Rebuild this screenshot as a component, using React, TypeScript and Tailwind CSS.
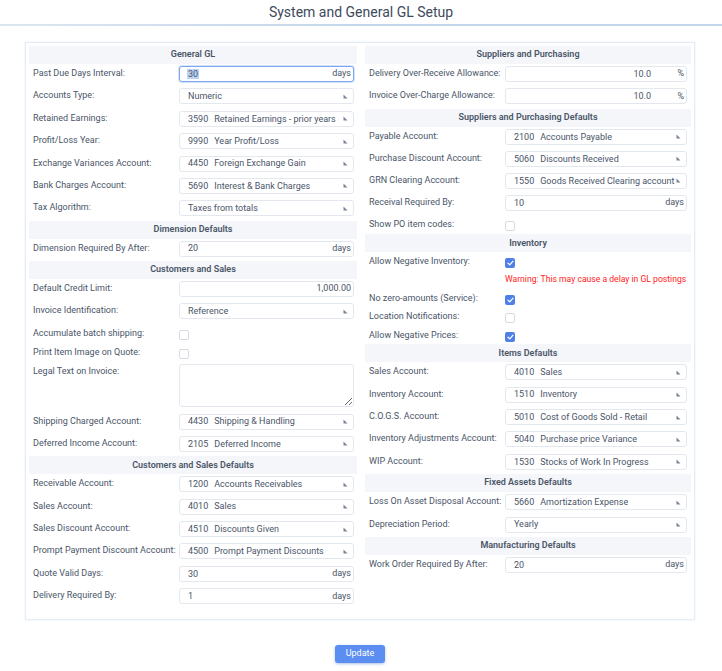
import React from "react";

const FONT = { fontFamily: "Roboto, 'Liberation Sans', sans-serif" };

function Arrow() {
  return (
    <svg width="5" height="5" viewBox="0 0 5 5" className="shrink-0">
      <path d="M0.5 0.5 L0.5 4.5 L4.5 4.5 Z" fill="#7b8494" />
    </svg>
  );
}

function Header({ children }: { children: React.ReactNode }) {
  return (
    <div className="h-[18px] bg-[#f4f6f9] flex items-center justify-center text-[9px] font-semibold text-[#4a5568]">
      {children}
    </div>
  );
}

function Row({
  label,
  children,
  h = "h-[22.4px]",
  side,
}: {
  label: string;
  children?: React.ReactNode;
  h?: string;
  side: "l" | "r";
}) {
  return (
    <div className={`flex items-start ${h}`}>
      <div
        className={`${side === "l" ? "w-[150px]" : "w-[140px]"} shrink-0 pl-1 pt-[3px] text-[9px] leading-[12px] text-[#4a5568] whitespace-nowrap`}
      >
        {label}
      </div>
      <div className={`flex-1 min-w-0 pt-[2px] ${side === "l" ? "pr-[3px]" : "pr-[4px]"}`}>{children}</div>
    </div>
  );
}

function Sel({ code, name }: { code?: string; name: string }) {
  return (
    <div className="h-[16px] border border-[#e3e8ef] rounded-[3px] bg-white flex items-center pl-[8px] pr-[5px] text-[9px] text-[#4a5568]">
      <div className="flex-1 flex gap-[6px] whitespace-nowrap overflow-hidden pt-[1px]">
        {code && <span>{code}</span>}
        <span>{name}</span>
      </div>
      <Arrow />
    </div>
  );
}

function Days({ value, focused = false, suffix = "days" }: { value: string; focused?: boolean; suffix?: string }) {
  return (
    <div
      className={`h-[16px] border rounded-[3px] bg-white flex items-center pl-[8px] pr-[2px] text-[9px] text-[#4a5568] ${
        focused ? "border-[#7ea6f0] shadow-[0_0_0_1px_#d5e3fb]" : "border-[#e3e8ef]"
      }`}
    >
      <div className="flex-1 pt-[1px]">
        {focused ? <span className="bg-[#bcd3f5] px-[1px] -ml-[1px]">{value}</span> : value}
      </div>
      <span>{suffix}</span>
    </div>
  );
}

function Num({ value }: { value: string }) {
  return (
    <div className="h-[16px] border border-[#e3e8ef] rounded-[3px] bg-white flex items-center justify-end pr-[2px] text-[9px] text-[#4a5568]">
      {value}
    </div>
  );
}

function Pct({ value }: { value: string }) {
  return (
    <div className="h-[16px] border border-[#e3e8ef] rounded-[3px] bg-white flex items-center text-[9px] text-[#4a5568]">
      <div className="flex-1 text-right pr-[2px] pt-[1px]">{value}</div>
      <div className="w-[33px] text-right pr-[2px]">%</div>
    </div>
  );
}

function Check({ checked = false }: { checked?: boolean }) {
  return (
    <div className="pt-[4px]">
      {checked ? (
        <div className="w-[10px] h-[10px] rounded-[2px] bg-[#4e80e8] flex items-center justify-center">
          <svg width="7" height="6" viewBox="0 0 7 6">
            <path d="M1 3.2 L2.8 4.8 L6 1.2" stroke="white" strokeWidth="1.2" fill="none" strokeLinecap="round" strokeLinejoin="round" />
          </svg>
        </div>
      ) : (
        <div className="w-[10px] h-[10px] rounded-[2px] border border-[#d6dbe3] bg-white" />
      )}
    </div>
  );
}

export default function App() {
  return (
    <div className="w-[722px] h-[671px] bg-white relative" style={FONT}>
      <div className="h-[24px] flex items-center justify-center text-[14px] text-[#3d4a5c]">
        System and General GL Setup
      </div>
      <div className="h-[2px] bg-gradient-to-r from-[#dbe6f1] via-[#c4d6ea] to-[#c4d6ea]" />
      <div className="ml-[25px] mt-[16px] w-[670px] h-[578px] border border-[#e4ecf6] shadow-[0_0_2px_rgba(180,200,225,0.35)] p-[3px] flex gap-[8px]">
        {/* Left column */}
        <div className="w-[328px] flex flex-col">
          <Header>General GL</Header>
          <Row side="l" label="Past Due Days Interval:"><Days value="30" focused /></Row>
          <Row side="l" label="Accounts Type:"><Sel name="Numeric" /></Row>
          <Row side="l" label="Retained Earnings:"><Sel code="3590" name="Retained Earnings - prior years" /></Row>
          <Row side="l" label="Profit/Loss Year:"><Sel code="9990" name="Year Profit/Loss" /></Row>
          <Row side="l" label="Exchange Variances Account:"><Sel code="4450" name="Foreign Exchange Gain" /></Row>
          <Row side="l" label="Bank Charges Account:"><Sel code="5690" name="Interest & Bank Charges" /></Row>
          <Row side="l" label="Tax Algorithm:"><Sel name="Taxes from totals" /></Row>
          <Header>Dimension Defaults</Header>
          <Row side="l" h="h-[22px]" label="Dimension Required By After:"><Days value="20" /></Row>
          <Header>Customers and Sales</Header>
          <Row side="l" label="Default Credit Limit:"><Num value="1,000.00" /></Row>
          <Row side="l" label="Invoice Identification:"><Sel name="Reference" /></Row>
          <Row side="l" h="h-[19px]" label="Accumulate batch shipping:"><Check /></Row>
          <Row side="l" h="h-[19px]" label="Print Item Image on Quote:"><Check /></Row>
          <Row side="l" h="h-[50px]" label="Legal Text on Invoice:">
            <textarea className="block w-full h-[43px] border border-[#e3e8ef] rounded-[3px] bg-white outline-none resize-y text-[9px]" />
          </Row>
          <Row side="l" label="Shipping Charged Account:"><Sel code="4430" name="Shipping & Handling" /></Row>
          <Row side="l" label="Deferred Income Account:"><Sel code="2105" name="Deferred Income" /></Row>
          <Header>Customers and Sales Defaults</Header>
          <Row side="l" label="Receivable Account:"><Sel code="1200" name="Accounts Receivables" /></Row>
          <Row side="l" label="Sales Account:"><Sel code="4010" name="Sales" /></Row>
          <Row side="l" label="Sales Discount Account:"><Sel code="4510" name="Discounts Given" /></Row>
          <Row side="l" label="Prompt Payment Discount Account:"><Sel code="4500" name="Prompt Payment Discounts" /></Row>
          <Row side="l" label="Quote Valid Days:"><Days value="30" /></Row>
          <Row side="l" label="Delivery Required By:"><Days value="1" /></Row>
        </div>
        {/* Right column */}
        <div className="w-[326px] flex flex-col">
          <Header>Suppliers and Purchasing</Header>
          <Row side="r" label="Delivery Over-Receive Allowance:"><Pct value="10.0" /></Row>
          <Row side="r" label="Invoice Over-Charge Allowance:"><Pct value="10.0" /></Row>
          <Header>Suppliers and Purchasing Defaults</Header>
          <Row side="r" h="h-[22px]" label="Payable Account:"><Sel code="2100" name="Accounts Payable" /></Row>
          <Row side="r" h="h-[22px]" label="Purchase Discount Account:"><Sel code="5060" name="Discounts Received" /></Row>
          <Row side="r" h="h-[22px]" label="GRN Clearing Account:"><Sel code="1550" name="Goods Received Clearing account" /></Row>
          <Row side="r" h="h-[22px]" label="Receival Required By:"><Days value="10" /></Row>
          <Row side="r" h="h-[19.5px]" label="Show PO item codes:"><Check /></Row>
          <Header>Inventory</Header>
          <Row side="r" h="h-[18.5px]" label="Allow Negative Inventory:"><Check checked /></Row>
          <div className="h-[18px] flex items-center pl-[140px] text-[8.6px] text-[#ff1a1a] whitespace-nowrap">
            Warning: This may cause a delay in GL postings
          </div>
          <Row side="r" h="h-[18.5px]" label="No zero-amounts (Service):"><Check checked /></Row>
          <Row side="r" h="h-[18.5px]" label="Location Notifications:"><Check /></Row>
          <Row side="r" h="h-[18.5px]" label="Allow Negative Prices:"><Check checked /></Row>
          <Header>Items Defaults</Header>
          <Row side="r" label="Sales Account:"><Sel code="4010" name="Sales" /></Row>
          <Row side="r" label="Inventory Account:"><Sel code="1510" name="Inventory" /></Row>
          <Row side="r" label="C.O.G.S. Account:"><Sel code="5010" name="Cost of Goods Sold - Retail" /></Row>
          <Row side="r" label="Inventory Adjustments Account:"><Sel code="5040" name="Purchase price Variance" /></Row>
          <Row side="r" label="WIP Account:"><Sel code="1530" name="Stocks of Work In Progress" /></Row>
          <Header>Fixed Assets Defaults</Header>
          <Row side="r" label="Loss On Asset Disposal Account:"><Sel code="5660" name="Amortization Expense" /></Row>
          <Row side="r" label="Depreciation Period:"><Sel name="Yearly" /></Row>
          <Header>Manufacturing Defaults</Header>
          <Row side="r" label="Work Order Required By After:"><Days value="20" /></Row>
        </div>
      </div>
      <div className="flex justify-center mt-[25px] pr-[2px]">
        <button className="w-[50px] h-[18px] rounded-[3px] bg-[#5b8ef0] text-white text-[9px] shadow-[0_1px_3px_rgba(70,110,200,0.45)]">
          Update
        </button>
      </div>
    </div>
  );
}
